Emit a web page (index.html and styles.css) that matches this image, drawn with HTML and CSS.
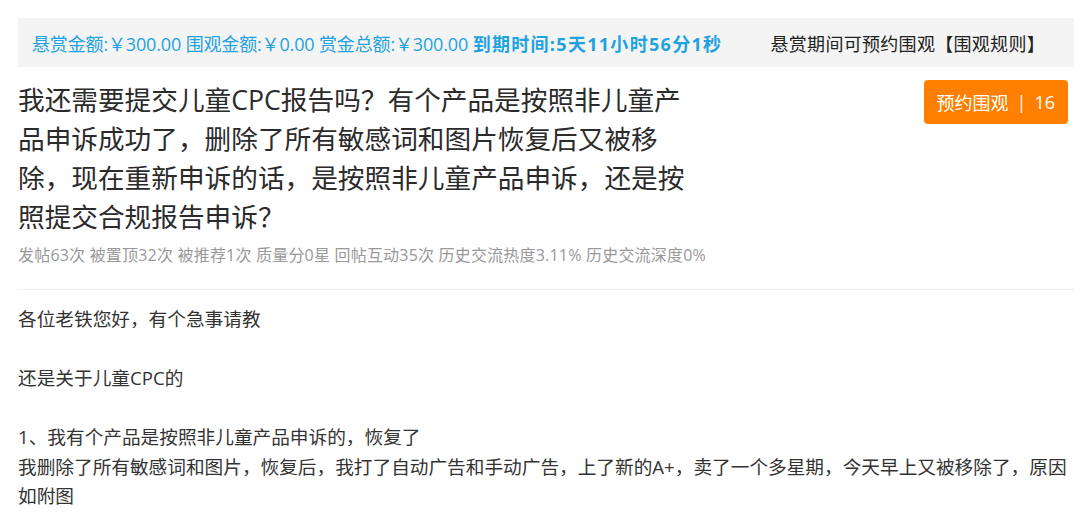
FILE: index.html
```html
<!DOCTYPE html>
<html lang="zh-CN">
<head>
<meta charset="utf-8">
<link rel="stylesheet" href="styles.css">
</head>
<body>
<div class="page">
  <div class="reward-bar">
    <div class="reward-info">悬赏金额:￥300.00 围观金额:￥0.00 赏金总额:￥300.00 <b class="deadline">到期时间:5天11小时56分1秒</b></div>
    <div class="reward-note">悬赏期间可预约围观【围观规则】</div>
  </div>
  <div class="head">
    <div class="head-main">
      <h1 class="title">我还需要提交儿童CPC报告吗？有个产品是按照非儿童产品申诉成功了，删除了所有敏感词和图片恢复后又被移除，现在重新申诉的话，是按照非儿童产品申诉，还是按照提交合规报告申诉？</h1>
      <div class="meta">发帖63次 被置顶32次 被推荐1次 质量分0星 回帖互动35次 历史交流热度3.11% 历史交流深度0%</div>
    </div>
    <button class="watch-btn">预约围观<span class="sep">|</span>16</button>
  </div>
  <div class="content">
    <p>各位老铁您好，有个急事请教</p>
    <p>还是关于儿童CPC的</p>
    <p>1、我有个产品是按照非儿童产品申诉的，恢复了<br>我删除了所有敏感词和图片，恢复后，我打了自动广告和手动广告，上了新的A+，卖了一个多星期，今天早上又被移除了，原因如附图</p>
  </div>
</div>
</body>
</html>
```
FILE: styles.css
```css
* { box-sizing: border-box; }
html, body { margin: 0; padding: 0; background: #fff; }
body {
  font-family: "Open Sans", "Noto Sans CJK SC", sans-serif;
  color: #333;
}
.page {
  width: 1056px;
  margin-left: 18px;
  padding-top: 18px;
}
.reward-bar {
  display: flex;
  justify-content: space-between;
  align-items: center;
  height: 49px;
  background: #f4f4f4;
  padding: 0 29px 0 14px;
  font-size: 18px;
}
.reward-info { color: #1fa3e0; white-space: nowrap; letter-spacing: -0.15px; }
.deadline { font-weight: 700; letter-spacing: 1.3px; }
.reward-note { color: #222; white-space: nowrap; letter-spacing: 0.3px; }
.head {
  display: flex;
  justify-content: space-between;
  align-items: flex-start;
  margin-top: 13px;
  padding-right: 6px;
}
.title {
  margin: 0;
  width: 680px;
  font-size: 26.67px;
  line-height: 39px;
  font-weight: 400;
  color: #2b2b2b;
}
.meta {
  margin-top: 7px;
  font-size: 16px;
  line-height: 24px;
  color: #999;
  letter-spacing: 0.2px;
}
.watch-btn {
  height: 44px;
  padding: 0 13px;
  border: none;
  border-radius: 4px;
  background: #ff8000;
  color: #fff;
  font-family: inherit;
  font-size: 18px;
  display: flex;
  align-items: center;
}
.sep { margin: 0 8px; }
.content {
  margin-top: 22px;
  border-top: 1px solid #efefef;
  padding-top: 14px;
  font-size: 18.67px;
  line-height: 29.5px;
  color: #333;
}
.content p { margin: 0 0 29.5px; }
```
